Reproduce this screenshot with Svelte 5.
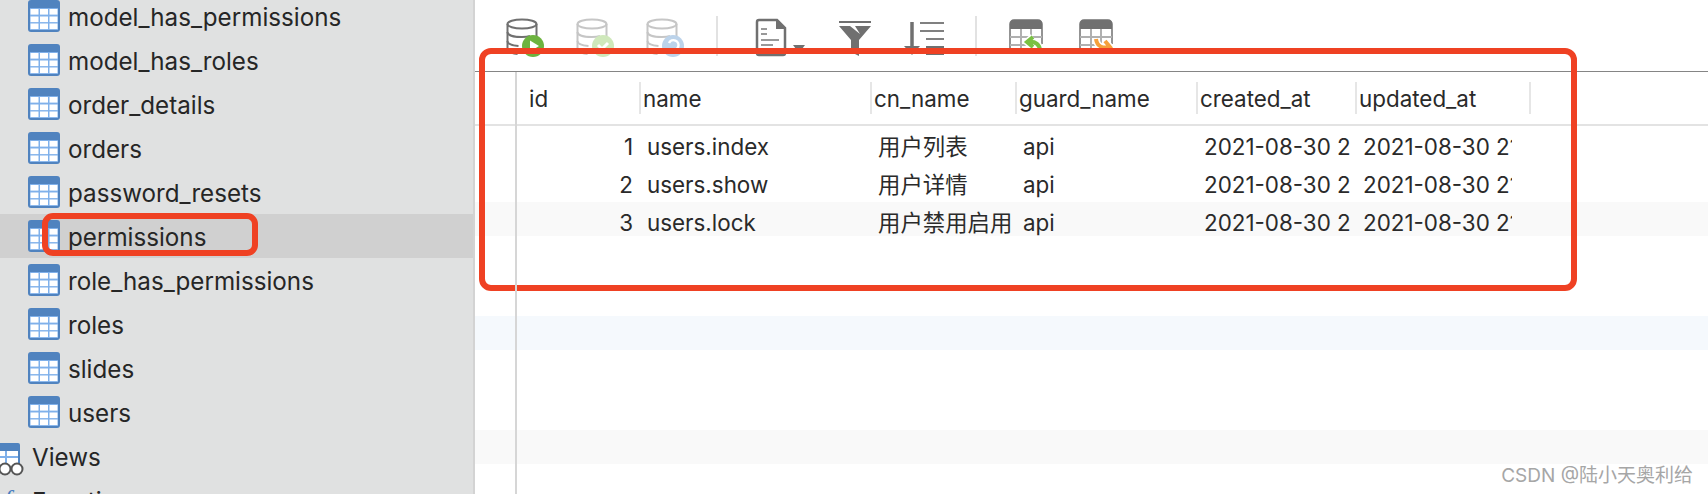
<script>
  const tables = ['model_has_permissions', 'model_has_roles', 'order_details', 'orders', 'password_resets', 'permissions', 'role_has_permissions', 'roles', 'slides', 'users'];
  const columns = ['id', 'name', 'cn_name', 'guard_name', 'created_at', 'updated_at'];
  const rows = [
    { id: 1, name: 'users.index', cn: '用户列表' },
    { id: 2, name: 'users.show', cn: '用户详情' },
    { id: 3, name: 'users.lock', cn: '用户禁用启用' }
  ];
  const stamp = '2021-08-30 21:14:08';
  // only every third row band shows in the shot
  const bands = [false, false, 'grey', false, false, 'blue', false, false, 'grey'];
</script>

{#snippet tableIcon()}
  <svg class="tbl" viewBox="0 0 32 32" width="32" height="32">
    <rect width="32" height="32" rx="3" fill="#5083bf" />
    <rect x="2" y="8" width="28" height="22" fill="#7fb0ea" />
    {#each [9, 16.5, 23.5] as y}
      {#each [2.5, 12, 21.5] as x}
        <rect {x} {y} width="8" height="5.6" fill="#fff" />
      {/each}
    {/each}
  </svg>
{/snippet}

{#snippet db(stroke, badge, kind)}
  <svg class="db" viewBox="0 0 40 40" width="40" height="40">
    <g fill="none" stroke={stroke} stroke-width="2">
      <ellipse cx="17" cy="6" rx="14.5" ry="4.6" />
      <path d="M2.5 6V31c0 3 6 5 10 5M31.5 6V20" />
      <path d="M2.5 14c0 3 6 5 14.500 5 3 0 6-.3 8-1M2.500 23c0 3 5 4.500 11 5" />
    </g>
    <circle cx="28" cy="28" r="11" fill={badge} />
    {#if kind === 'run'}
      <path d="M25 22.500l9 5.500-9 5.500z" fill="#fff" />
    {:else if kind === 'ok'}
      <path d="M23 27l4 4 6-6" fill="none" stroke="#fff" stroke-width="3" />
    {:else}
      <path d="M24 25a5 5 0 1 1 3 7" fill="none" stroke="#fff" stroke-width="2.500" />
    {/if}
  </svg>
{/snippet}

{#snippet gridIcon(arrow, d)}
  <svg class="grid-ico" viewBox="0 0 36 40" width="36" height="40">
    <path d="M1 30V6a4 4 0 0 1 4-4h24a4 4 0 0 1 4 4v20" fill="#fff" stroke="#707070" stroke-width="1.500" />
    <path d="M1 6a4 4 0 0 1 4-4h24a4 4 0 0 1 4 4v5H1z" fill="#707070" />
    <path d="M12 11v22M22 11v22M1 19h32M1 27h32" stroke="#b0b0b0" stroke-width="2" />
    <path {d} fill="none" stroke="#fff" stroke-width="7" />
    <path {d} fill="none" stroke={arrow} stroke-width="4" />
  </svg>
{/snippet}

<div class="app">
  <aside class="sidebar">
    <ul class="tables">
      {#each tables as t}
        <li class="row" class:active={t === 'permissions'}>
          {@render tableIcon()}
          <span class="label">{t}</span>
        </li>
      {/each}
      <li class="row group">
        <span class="views-ico">
          <svg viewBox="0 0 28 32" width="28" height="32">
            <rect width="28" height="22" rx="2" fill="#5083bf" />
            <rect x="2" y="8" width="24" height="14" fill="#fff" />
            <path d="M2 14h24M14 8v14" stroke="#7fb0ea" stroke-width="2" />
            <circle cx="13" cy="26" r="5.500" fill="#fff" stroke="#555" stroke-width="2" />
            <circle cx="25" cy="26" r="5.500" fill="#fff" stroke="#555" stroke-width="2" />
          </svg>
        </span>
        <span class="label">Views</span>
      </li>
      <li class="row group">
        <span class="fn-ico">f</span>
        <span class="label">Functions</span>
      </li>
    </ul>
  </aside>

  <main class="main">
    <div class="toolbar">
      {@render db('#707070', '#6db33f', 'run')}
      {@render db('#c6c6c6', '#cfe8bb', 'ok')}
      {@render db('#c6c6c6', '#bcd3ea', 'back')}
      <i class="sep"></i>
      <svg class="doc" viewBox="0 0 51 40" width="51" height="40">
        <path d="M2 4a2 2 0 0 1 2-2h18l8 8v25a2 2 0 0 1-2 2H4a2 2 0 0 1-2-2z" fill="#fff" stroke="#707070" stroke-width="2.500" />
        <path d="M21 2v9h9z" fill="#707070" />
        <path d="M6 11h6M6 16h6M6 22h18M6 27h12M6 32h18" stroke="#999" stroke-width="2" />
        <path d="M38 27h12l-6 8z" fill="#707070" />
      </svg>
      <svg class="funnel" viewBox="0 0 32 40" width="32" height="40">
        <path d="M0 4h32" stroke="#707070" stroke-width="2" />
        <path d="M0 8h32L20 22v16l-8-4V22z" fill="#707070" />
        <path d="M11 8h5l5 8z" fill="#fff" />
      </svg>
      <svg class="sort" viewBox="0 0 40 40" width="40" height="40">
        <path d="M8 4v26" stroke="#707070" stroke-width="3.500" />
        <path d="M0 28h16l-8 9z" fill="#707070" />
        <path d="M16 5h24M16 13h24M22 21h18" stroke="#808080" stroke-width="2" />
        <rect x="22" y="28" width="18" height="9" fill="#707070" />
      </svg>
      <i class="sep"></i>
      {@render gridIcon('#7ac143', 'M31 33c0-6-4-10-12-9m5-5l-6 5 6 5')}
      {@render gridIcon('#f5a03c', 'M17 21c1 7 6 10 14 8m-5-6l5 6-6 4')}
    </div>

    <div class="table">
      <div class="cols head">
        {#each columns as c}
          <div class="th">{c}</div>
        {/each}
      </div>
      {#each bands as band, i}
        <div class="tr {band || ''}">
          {#if rows[i]}
            <div class="cols">
              <div class="td num"><span>{rows[i].id}</span></div>
              <div class="td"><span>{rows[i].name}</span></div>
              <div class="td"><span>{rows[i].cn}</span></div>
              <div class="td"><span>api</span></div>
              <div class="td"><span>{stamp}</span></div>
              <div class="td last"><span>{stamp}</span></div>
            </div>
          {/if}
        </div>
      {/each}
    </div>
  </main>

  <div class="mark big"></div>
  <div class="mark small"></div>
  <div class="credit">CSDN @陆小天奥利给</div>
</div>

<style>
  :global(body) {
    margin: 0;
    overflow: hidden;
    background: #fff;
  }

  .app {
    position: relative;
    display: flex;
    height: 494px;
    overflow: hidden;
    font-family: Inter, 'Noto Sans CJK SC', sans-serif;
    color: #262626;
  }

  .sidebar {
    flex: 0 0 473px;
    background: #e0e1e1;
    border-right: 2px solid #d3d3d3;
    overflow: hidden;
  }

  .tables {
    list-style: none;
    margin: -6px 0 0;
    padding: 0;
  }

  .row {
    display: flex;
    align-items: center;
    height: 44px;
    padding-left: 28px;
    gap: 8px;
    font-size: 24.2px;
    white-space: nowrap;
  }

  .label {
    padding-top: 2px;
  }

  .row.active {
    background: #d0d0d0;
  }

  .row.group {
    padding-left: 0;
    gap: 0;
  }

  .row.group .label {
    margin-left: 32px;
  }

  .row.group .views-ico + .label {
    margin-left: 12px;
  }

  .tbl {
    flex: none;
  }

  .views-ico {
    flex: none;
    width: 20px;
    height: 32px;
    margin-top: 6px;
    overflow: visible;
  }

  .views-ico svg {
    margin-left: -8px;
    overflow: visible;
  }

  .fn-ico {
    position: absolute;
    left: 4px;
    font: italic 26px 'Liberation Serif', serif;
    color: #4a7fc0;
  }

  .main {
    flex: 1;
    min-width: 0;
  }

  .toolbar {
    display: flex;
    box-sizing: border-box;
    height: 72px;
    padding: 18px 0 0 30px;
    border-bottom: 1px solid #858585;
    gap: 30px;
    background: #fff;
  }

  .toolbar svg {
    flex: none;
  }

  .sep {
    flex: none;
    width: 2px;
    height: 40px;
    margin: -2px 0 0 1px;
    background: #e2e2e2;
  }

  .doc {
    margin-left: 7px;
  }

  .funnel,
  .sort {
    margin-left: 3px;
  }

  .grid-ico {
    margin-left: 2px;
  }

  .grid-ico + .grid-ico {
    margin-left: 4px;
  }

  .table {
    position: relative;
    font-size: 22.4px;
    color: #2a2a2a;
  }

  /* row-number gutter rule */
  .table::before {
    content: '';
    position: absolute;
    left: 40px;
    top: 0;
    height: 430px;
    width: 2px;
    background: #d6d6d6;
    z-index: 1;
  }

  .cols {
    display: grid;
    grid-template-columns: 125px 231px 145px 181px 159px 174px;
    margin-left: 41px;
    width: 1015px;
  }

  .head {
    height: 52px;
    align-items: center;
  }

  .th {
    box-sizing: border-box;
    height: 32px;
    line-height: 33px;
    padding-left: 2px;
    border-right: 2px solid #e6e6e6;
  }

  .th:first-child {
    padding-left: 13px;
  }

  .tr {
    height: 34px;
    margin-bottom: 4px;
  }

  .head + .tr {
    border-top: 2px solid #e3e3e3;
  }

  .tr.grey {
    background: #f9f9f9;
  }

  .tr.blue {
    background: #f5f9fd;
  }

  .td {
    padding: 8px 6px 0 6px;
    min-width: 0;
    line-height: 26px;
  }

  .td span {
    display: block;
    overflow: hidden;
    white-space: nowrap;
  }

  .td.num {
    text-align: right;
    padding-right: 8px;
  }

  .td.last {
    padding-right: 19px;
  }

  .mark {
    position: absolute;
    box-sizing: border-box;
    border: 6px solid #ef4123;
    pointer-events: none;
  }

  .mark.big {
    left: 479px;
    top: 48px;
    width: 1098px;
    height: 243px;
    border-radius: 12px;
  }

  .mark.small {
    left: 42px;
    top: 213px;
    width: 216px;
    height: 43px;
    border-radius: 11px;
  }

  .credit {
    position: absolute;
    right: 15px;
    top: 464px;
    font-size: 19px;
    line-height: 24px;
    color: #a6a6a6;
    white-space: nowrap;
  }
</style>
